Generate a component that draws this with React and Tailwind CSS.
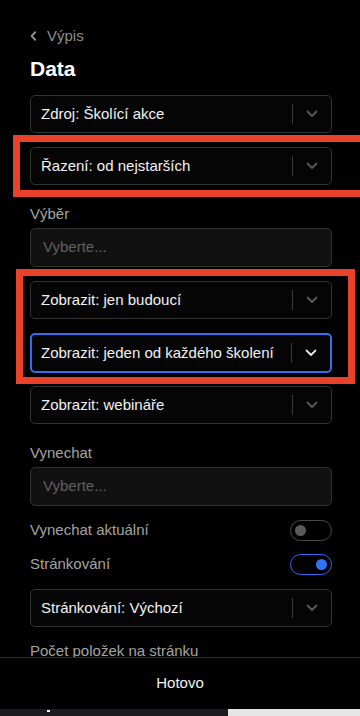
import React from "react";

const Chevron = ({ className }) => (
  <svg viewBox="0 0 12 8" className={className} fill="none" stroke="currentColor" strokeWidth="1.8" strokeLinecap="round" strokeLinejoin="round">
    <path d="M1.5 1.5 6 6l4.5-4.5" />
  </svg>
);

const Select = ({ label, focused, className = "" }) => (
  <div
    className={
      "flex items-center rounded-[5px] bg-[#050505] " +
      (focused ? "h-[40px] border-2 border-[#2f6ff0] pl-[9px]" : "h-[38px] border border-[#343434] pl-[10px]") +
      " " + className
    }
  >
    <span className="flex-1 truncate text-[15px] text-[#f2f2f2]">{label}</span>
    <span className="h-5 w-px bg-[#3a3a3a]" />
    <span className="flex w-[38px] justify-center">
      <Chevron className={focused ? "h-[8px] w-[12px] text-[#e6e6e6]" : "h-[8px] w-[12px] text-[#5a5a5a]"} />
    </span>
  </div>
);

const Input = ({ className = "" }) => (
  <div className={"flex h-[39px] items-center rounded-[5px] border border-[#333] bg-[#111] pl-[12px] " + className}>
    <span className="text-[15px] text-[#5f5f5f]">Vyberte...</span>
  </div>
);

const Label = ({ children, className = "" }) => (
  <div className={"h-5 text-[15px] leading-5 text-[#a3a3a3] " + className}>{children}</div>
);

const Toggle = ({ on }) => (
  <div
    className={
      "flex h-[21px] w-[42px] items-center rounded-full border px-[4px] " +
      (on ? "justify-end border-[#2f6ff0]" : "justify-start border-[#4a4a4a]")
    }
  >
    <span className={"h-[11px] w-[11px] rounded-full " + (on ? "bg-[#2f72f5]" : "bg-[#5a5a5a]")} />
  </div>
);

export default function App() {
  return (
    <div className="flex h-[716px] w-[360px] flex-col overflow-hidden bg-black font-['Liberation_Sans',Arial,sans-serif]">
      <div className="relative flex-1 overflow-hidden pl-[30px] pr-[28px] pt-[26px]">
        <div className="flex h-5 items-center gap-[10px] text-[#8e8e8e]">
          <svg viewBox="0 0 8 12" className="h-[10px] w-[7px]" fill="none" stroke="currentColor" strokeWidth="2.2" strokeLinecap="round" strokeLinejoin="round">
            <path d="M6 1.5 1.8 6 6 10.5" />
          </svg>
          <span className="text-[15px]">Výpis</span>
        </div>
        <h1 className="mt-[9px] h-7 text-[21px] font-bold leading-7 text-white">Data</h1>

        <Select label="Zdroj: Školící akce" className="mt-3" />

        <div className="relative mt-[14px]">
          <Select label="Řazení: od nejstarších" />
          <div className="pointer-events-none absolute -bottom-[12px] -left-[17px] -right-[60px] -top-[12px] border-[7px] border-[#e8432a]" />
        </div>

        <Label className="mt-[19px]">Výběr</Label>
        <Input className="mt-1" />

        <div className="relative mt-[14px]">
          <Select label="Zobrazit: jen budoucí" />
          <Select label="Zobrazit: jeden od každého školení" focused className="mt-[14px]" />
          <div className="pointer-events-none absolute -bottom-[11px] -left-[14px] -right-[23px] -top-[12px] border-[7px] border-[#e8432a]" />
        </div>

        <Select label="Zobrazit: webináře" className="mt-[13px]" />

        <Label className="mt-[19px]">Vynechat</Label>
        <Input className="mt-1" />

        <div className="mt-[13px] flex h-[22px] items-center justify-between">
          <Label>Vynechat aktuální</Label>
          <Toggle />
        </div>
        <div className="mt-3 flex h-[22px] items-center justify-between">
          <Label>Stránkování</Label>
          <Toggle on />
        </div>

        <Select label="Stránkování: Výchozí" className="mt-[14px]" />

        <Label className="mt-[14px]">Počet položek na stránku</Label>
      </div>

      <div className="flex h-[52px] shrink-0 items-center justify-center border-t border-[#2e2e2e] bg-black">
        <span className="text-[15px] text-[#f2f2f2]">Hotovo</span>
      </div>
      <div className="flex h-[7px] shrink-0">
        <div className="relative w-[228px] bg-[#1c1c1e]">
          <span className="absolute left-[47px] top-[1px] h-[2px] w-[3px] bg-white" />
        </div>
        <div className="flex-1 bg-[#e6e6e6]" />
      </div>
    </div>
  );
}
